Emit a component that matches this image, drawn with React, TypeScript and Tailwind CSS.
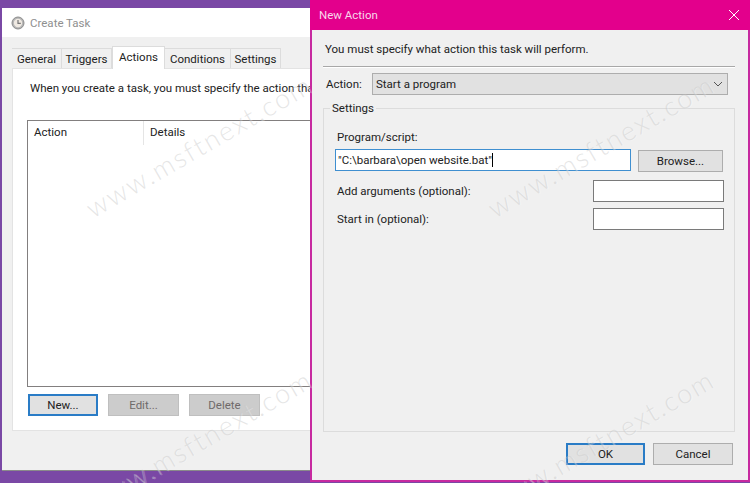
import { ReactNode } from "react";

function Tab({ label, active, w }: { label: string; active?: boolean; w: string }) {
  if (active) {
    return (
      <div className={`${w} relative z-10 -mb-px h-[23px] bg-white border border-b-0 border-[#dcdcdc] flex items-start justify-center pt-[2px]`}>
        {label}
      </div>
    );
  }
  return (
    <div className={`${w} mt-[2px] h-[20px] bg-[#f0f0f0] border border-b-0 border-l-0 border-[#dcdcdc] flex items-center justify-center`}>
      {label}
    </div>
  );
}

function Btn({ children, w, state = "normal" }: { children: ReactNode; w: string; state?: "normal" | "focus" | "disabled" }) {
  const look =
    state === "focus"
      ? "bg-[#e1e1e1] border-2 border-[#2a7cc6] text-[#222]"
      : state === "disabled"
        ? "bg-[#cccccc] border border-[#bfbfbf] text-[#6f6a6a]"
        : "bg-[#e1e1e1] border border-[#adadad] text-[#222]";
  return <div className={`${w} h-[22px] ${look} flex items-center justify-center`}>{children}</div>;
}

function Watermark({ pos }: { pos: string }) {
  return (
    <div className={`absolute ${pos} origin-left -rotate-[30deg] whitespace-nowrap text-[27px] leading-[30px] font-light tracking-[1.9px] text-[#c8c8c8]/45 font-['Lato',sans-serif] [text-shadow:1px_1px_0_rgba(255,255,255,0.25)] pointer-events-none`}>
      www.msftnext.com
    </div>
  );
}

export default function App() {
  return (
    <div className="font-['Roboto','Noto_Sans',sans-serif] relative w-[750px] h-[483px] overflow-hidden bg-[#7a48a5] text-[11.5px] leading-[16px] text-[#222]">
      {/* Create Task window */}
      <div className="absolute left-[2px] top-[8px] w-[310px] h-[463px] bg-[#f0f0f0] flex flex-col border-b border-[#8a8a8a]">
        <div className="h-[29px] shrink-0 bg-white flex items-center gap-[5px] pl-[9px] text-[#8f8f8f]">
          <svg width="14" height="14" viewBox="0 0 14 14">
            <circle cx="7" cy="7" r="6" fill="#b5b5b5" stroke="#8c8c8c" />
            <circle cx="7" cy="7" r="4.2" fill="#efe9e2" />
            <path d="M7 4v3.4h2.8" fill="none" stroke="#777" strokeWidth="1.2" />
          </svg>
          <span>Create Task</span>
        </div>
        <div className="flex pl-[10px] pt-[9px]">
          <Tab label="General" w="w-[50px] border-l" />
          <Tab label="Triggers" w="w-[50px]" />
          <Tab label="Actions" active w="w-[53px]" />
          <Tab label="Conditions" w="w-[66px]" />
          <Tab label="Settings" w="w-[50px]" />
        </div>
        <div className="ml-[10px] h-[363px] bg-white border border-[#e3e3e3] border-r-0 flex flex-col pl-[14px] overflow-hidden">
          <div className="mt-[11px] pl-[3px] whitespace-nowrap">When you create a task, you must specify the action that will occur when</div>
          <div className="mt-[24px] h-[267px] -mr-[10px] shrink-0 border border-[#827f7f] bg-white">
            <div className="flex h-[24px]">
              <div className="w-[116px] pl-[6px] pt-[3px] border-r border-[#e5e5e5]">Action</div>
              <div className="pl-[6px] pt-[3px]">Details</div>
            </div>
          </div>
          <div className="mt-[7px] ml-[1px] flex gap-[10px]">
            <Btn w="w-[70px]" state="focus">New...</Btn>
            <Btn w="w-[71px]" state="disabled">Edit...</Btn>
            <Btn w="w-[71px]" state="disabled">Delete</Btn>
          </div>
        </div>
      </div>

      {/* New Action dialog */}
      <div className="absolute left-[310px] top-0 w-[440px] h-[482px] bg-[#f0f0f0] border-2 border-t-0 border-[#c72aa0] flex flex-col">
        <div className="h-[30px] -mx-[2px] shrink-0 bg-[#e3008c] flex items-center justify-between pl-[9px] pr-[9px] text-[#f8d7ea]">
          <span>New Action</span>
          <svg width="10" height="10" viewBox="0 0 10 10" className="mr-[2px]">
            <path d="M0 0 10 10M10 0 0 10" stroke="#fff" strokeWidth="1" />
          </svg>
        </div>
        <div className="flex-1 flex flex-col pl-[11px] pr-[13px]">
          <div className="pl-[2px] pt-[11px] h-[36px]">You must specify what action this task will perform.</div>
          <div className="h-[2px] bg-[#a8a8a8] border-b border-white" />
          <div className="flex items-center mt-[5px] pl-[3px] pr-[7px]">
            <span className="w-[46px]">Action:</span>
            <div className="flex-1 h-[22px] bg-[#e1e1e1] border border-[#adadad] flex items-center justify-between pl-[3px] pr-[4px]">
              <span>Start a program</span>
              <svg width="10" height="6" viewBox="0 0 10 6">
                <path d="M1 1 5 5 9 1" fill="none" stroke="#555" />
              </svg>
            </div>
          </div>
          <div className="relative mt-[13px] h-[324px] border border-[#dcdcdc] pl-[13px] pr-[10px]">
            <span className="absolute -top-[9px] left-[6px] px-[2px] bg-[#f0f0f0]">Settings</span>
            <div className="mt-[20px]">Program/script:</div>
            <div className="mt-[4px] flex items-start gap-[7px] -ml-[2px]">
              <div className="w-[296px] h-[22px] bg-white border border-[#3f8fd0] flex items-center pl-[2px]">
                <span>"C:\barbara\open website.bat"</span>
                <span className="w-px h-[14px] bg-black" />
              </div>
              <div className="mt-px">
                <Btn w="w-[85px]">Browse...</Btn>
              </div>
            </div>
            <div className="mt-[8px] flex items-center justify-between h-[22px]">
              <span>Add arguments (optional):</span>
              <div className="w-[131px] h-[22px] bg-white border border-[#7a7a7a]" />
            </div>
            <div className="mt-[6px] flex items-center justify-between h-[22px]">
              <span>Start in (optional):</span>
              <div className="w-[131px] h-[22px] bg-white border border-[#7a7a7a]" />
            </div>
          </div>
          <div className="mt-[11px] flex justify-end gap-[8px] pr-[2px]">
            <Btn w="w-[79px]" state="focus">OK</Btn>
            <Btn w="w-[80px]">Cancel</Btn>
          </div>
        </div>
      </div>

      <Watermark pos="left-[88px] top-[195px]" />
      <Watermark pos="left-[490px] top-[195px]" />
      <Watermark pos="left-[88px] top-[490px]" />
      <Watermark pos="left-[490px] top-[490px]" />
    </div>
  );
}
